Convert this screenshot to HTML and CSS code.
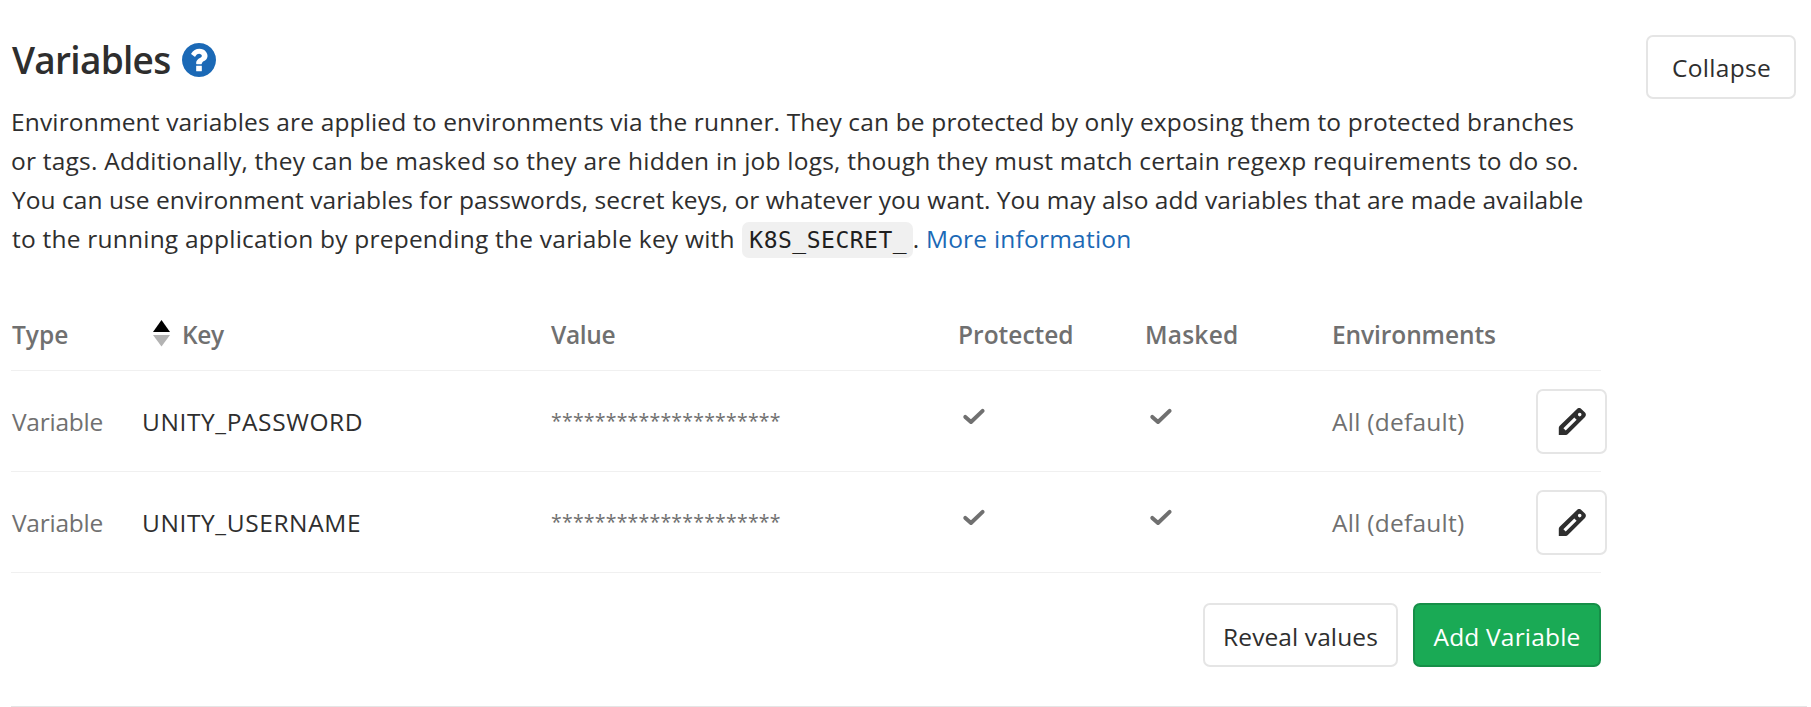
FILE: index.html
```
<!DOCTYPE html>
<html lang="en">
<head>
<meta charset="utf-8">
<title>Variables</title>
<link rel="stylesheet" href="styles.css">
</head>
<body>
<svg class="sprite" width="0" height="0" aria-hidden="true">
  <symbol id="check" viewBox="0 0 24 18"><path d="M3.3 8.9 9 14 20.600 2.900" fill="none" stroke="currentColor" stroke-width="4" stroke-linecap="round" stroke-linejoin="round"/></symbol>
  <symbol id="pencil" viewBox="0 0 28 28"><path fill="currentColor" fill-rule="evenodd" d="M.8 27V19.800Q.8 18.700 1.700 17.800L19 .9Q21.200-1 23.300.9L27 4.600Q28.800 6.800 27 8.900L9.900 26.100Q9 27 7.900 27ZM5.400 20.300 7.700 22.600 18.600 11.700 16.300 9.400ZM21.700 4.800a1.800 1.800 0 1 0 0 3.600a1.800 1.800 0 1 0 0-3.600Z"/></symbol>
</svg>
<section class="settings">
  <header class="top">
    <div class="intro">
      <h4 class="title"><span>Variables</span>
        <svg class="help" viewBox="0 0 1536 1536"><path fill="currentColor" d="M896 1248v-192q0-14-9-23t-23-9h-192q-14 0-23 9t-9 23v192q0 14 9 23t23 9h192q14 0 23-9t9-23zm256-672q0-88-55.500-163t-138.500-116-170-41q-243 0-371 213-15 24 8 42l132 100q7 6 19 6 16 0 25-12 53-68 86-92 34-24 86-24 48 0 85.500 26t37.500 59q0 38-20 61t-68 45q-63 28-115.500 86.500t-52.500 125.500v36q0 14 9 23t23 9h192q14 0 23-9t9-23q0-19 21.500-49.500t54.500-49.500q32-18 49-28.500t46-35 44.500-48 28-60.500 12.500-81zm384 192q0 209-103 385.500t-279.500 279.500-385.500 103-385.500-103-279.500-279.500-103-385.500 103-385.500 279.500-279.500 385.500-103 385.500 103 279.500 279.500 103 385.500z"/></svg>
      </h4>
      <p class="desc">
        <span class="line l1">Environment variables are applied to environments via the runner. They can be protected by only exposing them to protected branches</span>
        <span class="line l2">or tags. Additionally, they can be masked so they are hidden in job logs, though they must match certain regexp requirements to do so.</span>
        <span class="line l3">You can use environment variables for passwords, secret keys, or whatever you want. You may also add variables that are made available</span>
        <span class="line l4">to the running application by prepending the variable key with <code class="code">K8S_SECRET_</code>. <a class="link">More information</a></span>
      </p>
    </div>
    <button class="btn collapse">Collapse</button>
  </header>

  <div class="table">
    <div class="row head">
      <span class="h-type">Type</span>
      <span class="key-head"><svg class="sort" viewBox="0 0 17 27"><path d="M8.500 0 17 12H0Z" fill="#000"/><path d="M0 15H17L8.500 26.500Z" fill="#b3b3b3"/></svg><span class="h-key">Key</span></span>
      <span class="h-value">Value</span>
      <span>Protected</span>
      <span class="h-masked">Masked</span>
      <span class="h-env">Environments</span>
    </div>
    <div class="row">
      <span class="type">Variable</span>
      <span class="key">UNITY_PASSWORD</span>
      <span class="stars">*********************</span>
      <svg class="check"><use href="#check"/></svg>
      <svg class="check"><use href="#check"/></svg>
      <span class="env">All (default)</span>
      <button class="btn edit" aria-label="Edit"><svg class="pencil"><use href="#pencil"/></svg></button>
    </div>
    <div class="row">
      <span class="type">Variable</span>
      <span class="key">UNITY_USERNAME</span>
      <span class="stars">*********************</span>
      <svg class="check"><use href="#check"/></svg>
      <svg class="check"><use href="#check"/></svg>
      <span class="env">All (default)</span>
      <button class="btn edit" aria-label="Edit"><svg class="pencil"><use href="#pencil"/></svg></button>
    </div>
    <div class="actions">
      <button class="btn reveal">Reveal values</button>
      <button class="btn add">Add Variable</button>
    </div>
  </div>
</section>
</body>
</html>
```
FILE: styles.css
```
* { box-sizing: border-box; }
body {
  margin: 0;
  background: #fff;
  color: #2e2e2e;
  font: 24.5px/39px "Open Sans", "Noto Sans", sans-serif;
  overflow: hidden;
}
.sprite { display: block; }
.settings {
  margin-left: 11px;
  width: 1796px;
  height: 707px;
  padding-top: 34px;
  border-bottom: 1px solid #e5e5e5;
}
.top { display: flex; justify-content: space-between; padding-right: 11px; }
.title {
  display: flex;
  align-items: center;
  gap: 12px;
  height: 68px;
  padding: 0 0 16px 1px;
  margin: 0;
  font-size: 37px;
  line-height: 52px;
  font-weight: 600;
  letter-spacing: -0.72px;
}
.help { width: 34px; height: 34px; color: #1b69b6; }
.desc { margin: 0; }
.line { display: block; white-space: nowrap; }
.l1 { letter-spacing: 0.149px; }
.l2 { letter-spacing: 0.22px; }
.l3 { letter-spacing: 0.052px; padding-left: 1px; }
.l4 { letter-spacing: 0.22px; padding-left: 1px; }
.code {
  margin-left: 1px;
  padding: 4.7px 5.500px 4.6px 7px;
  border-radius: 7px;
  background: #f0f0f0;
  color: #1f1f1f;
  font: 23px/36px "DejaVu Sans Mono", monospace;
  letter-spacing: 0.5px;
}
.link { color: #1b69b6; }

.btn {
  display: flex;
  align-items: center;
  justify-content: center;
  flex: none;
  height: 64px;
  padding: 1px 0 0;
  border: 2px solid #e5e5e5;
  border-radius: 7px;
  background: #fff;
  color: #2e2e2e;
  font: inherit;
  white-space: nowrap;
}
.collapse { width: 150px; margin-top: 1px; padding-left: 1px; letter-spacing: 0.31px; }

.table { width: 1590px; margin-top: 40px; }
.row {
  display: grid;
  grid-template-columns: 131px 409px 407px 187px 187px 204px 65px;
  align-items: center;
  height: 101px;
  padding-top: 1px;
  border-bottom: 1px solid #f0f0f0;
  color: #707070;
}
.head { height: 73px; font-weight: 600; }
.h-type { padding-left: 1px; }
.key-head { display: flex; align-items: center; gap: 12px; padding-left: 11px; }
.sort { width: 17px; height: 27px; margin-bottom: 3px; }
.h-key { letter-spacing: -0.37px; }
.h-value { letter-spacing: -0.34px; }
.h-masked { letter-spacing: 0.22px; }
.h-env { letter-spacing: -0.09px; }
.type { padding-left: 1px; letter-spacing: -0.24px; }
.key { color: #2e2e2e; letter-spacing: 0.6px; }
.stars { font-size: 19.5px; letter-spacing: 0.2px; padding-bottom: 2px; }
.env { letter-spacing: 0.25px; }
.check { width: 24px; height: 18px; margin: 0 0 9px 4px; }
.edit { width: 71px; height: 65px; padding: 0; }
.pencil { width: 28px; height: 28px; }

.actions { display: flex; justify-content: flex-end; gap: 15px; padding-top: 30px; }
.reveal { width: 195px; padding-top: 2px; letter-spacing: 0.1px; }
.add {
  width: 188px;
  padding-top: 2px;
  background: #1aaa55;
  border-color: #168f48;
  color: #fff;
  letter-spacing: 0.18px;
}
```
